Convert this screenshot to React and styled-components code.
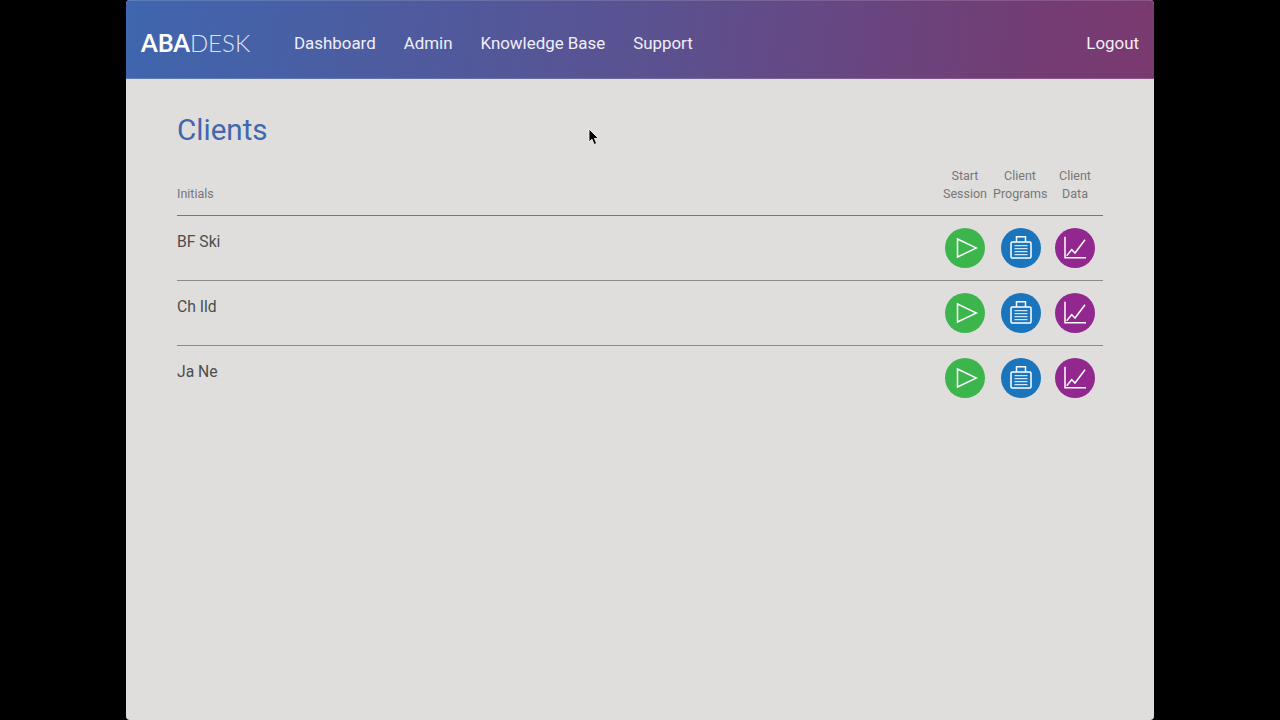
import React from "react";
import styled, { createGlobalStyle } from "styled-components";

const GlobalStyle = createGlobalStyle`
  html, body {
    margin: 0;
    height: 100%;
    background: #000;
  }
  #root {
    height: 100%;
  }
`;

const clients = ["BF Ski", "Ch Ild", "Ja Ne"];

const PlayIcon = () => (
  <svg width="26" height="26" viewBox="0 0 26 26" fill="none" stroke="#fff" strokeWidth="1.5">
    <path d="M5.5 4 L24.5 13 L5.5 22 Z" />
  </svg>
);

const ClipboardIcon = () => (
  <svg width="24" height="26" viewBox="0 0 24 26" fill="none" stroke="#fff" strokeWidth="1.5">
    <path d="M7.5 7 V1.8 H16.5 V7" />
    <rect x="2" y="7" width="20" height="16" rx="1.2" />
    <path d="M5.5 10.7 H18.5 M5.5 13.7 H18.5 M5.5 16.7 H18.5 M5.5 19.7 H18.5" strokeWidth="1" />
  </svg>
);

const ChartIcon = () => (
  <svg width="26" height="26" viewBox="0 0 26 26" fill="none" stroke="#fff" strokeWidth="1.5">
    <path d="M3 1.7 V22.7 H24" />
    <path d="M4.7 20.7 L9.7 14.7 L13 18 L23 4.7" />
  </svg>
);

const Cursor = () => (
  <CursorMark width="12" height="18" viewBox="0 0 12 18">
    <path d="M1 1 V14 L4 11.2 L6.2 16.5 L8.6 15.4 L6.4 10.4 H10.4 Z" fill="#000" stroke="#fff" strokeWidth="0.8" />
  </CursorMark>
);

const App = () => {
  return (
    <>
      <GlobalStyle />
      <Page>
        <Window>
          <Header>
            <Logo>
              <b>ABA</b>DESK
            </Logo>
            <Nav>
              <NavLink href="#">Dashboard</NavLink>
              <NavLink href="#">Admin</NavLink>
              <NavLink href="#">Knowledge Base</NavLink>
              <NavLink href="#">Support</NavLink>
            </Nav>
            <NavLink href="#">Logout</NavLink>
          </Header>
          <Content>
            <Title>Clients</Title>
            <HeadRow>
              <HeadCell $left>Initials</HeadCell>
              <HeadCell>Start<br />Session</HeadCell>
              <HeadCell>Client<br />Programs</HeadCell>
              <HeadCell>Client<br />Data</HeadCell>
            </HeadRow>
            {clients.map((client) => (
              <Row key={client}>
                <Name>{client}</Name>
                <ActionCell>
                  <RoundButton $color="#3cb54d"><PlayIcon /></RoundButton>
                </ActionCell>
                <ActionCell>
                  <RoundButton $color="#1b75bc"><ClipboardIcon /></RoundButton>
                </ActionCell>
                <ActionCell>
                  <RoundButton $color="#92278f"><ChartIcon /></RoundButton>
                </ActionCell>
              </Row>
            ))}
          </Content>
          <Cursor />
        </Window>
      </Page>
    </>
  );
};

const Page = styled.div`
  display: flex;
  justify-content: center;
  height: 100%;
  overflow: hidden;
`;

const Window = styled.div`
  position: relative;
  width: 1028px;
  height: 720px;
  background: #dfdedc;
  border-radius: 4px;
  overflow: hidden;
  font-family: "Roboto", "Liberation Sans", sans-serif;
`;

const Header = styled.header`
  display: flex;
  align-items: center;
  height: 79px;
  padding: 6px 15px 0;
  box-sizing: border-box;
  background: linear-gradient(97deg, #3f66ae 0%, #5a5291 50%, #723d75 86%, #7a3a6f 100%);
  box-shadow: inset 0 1px rgba(255, 255, 255, 0.14), inset 0 -1px rgba(255, 255, 255, 0.14);
`;

const Logo = styled.div`
  font-family: "Lato", sans-serif;
  font-size: 24px;
  font-weight: 300;
  line-height: 1;
  color: #dfe3f2;
  width: 153px;

  b {
    font-weight: 700;
    color: #fff;
  }
`;

const Nav = styled.nav`
  display: flex;
  gap: 28px;
  flex: 1;
`;

const NavLink = styled.a`
  font-size: 16.9px;
  color: #f1eef7;
  text-decoration: none;
`;

const Content = styled.main`
  padding: 34px 51px 0;
`;

const Title = styled.h1`
  margin: 0;
  font-size: 29.6px;
  font-weight: 400;
  line-height: 34px;
  color: #4167ae;
`;

const HeadRow = styled.div`
  display: grid;
  grid-template-columns: 1fr 56px 54px 56px;
  align-items: end;
  margin-top: 20px;
  padding-bottom: 12px;
  border-bottom: 1px solid #777;
`;

const HeadCell = styled.div`
  font-size: 12.5px;
  line-height: 18px;
  color: #777;
  white-space: nowrap;
  text-align: ${(props) => (props.$left ? "left" : "center")};
`;

const Row = styled.div`
  display: grid;
  grid-template-columns: 1fr 56px 56px 52px;
  height: 65px;
  padding-right: 2px;
  box-sizing: border-box;
  border-bottom: 1px solid #8a8a8a;

  &:last-child {
    border-bottom: none;
  }
`;

const Name = styled.div`
  padding-top: 16.5px;
  font-size: 15.7px;
  line-height: 18px;
  color: #4d4d4d;
`;

const ActionCell = styled.div`
  display: flex;
  justify-content: center;
  padding-top: 12px;
`;

const RoundButton = styled.div`
  display: flex;
  align-items: center;
  justify-content: center;
  width: 40px;
  height: 40px;
  border-radius: 50%;
  background: ${(props) => props.$color};
`;

const CursorMark = styled.svg`
  position: absolute;
  left: 462px;
  top: 128px;
`;

export default App;
